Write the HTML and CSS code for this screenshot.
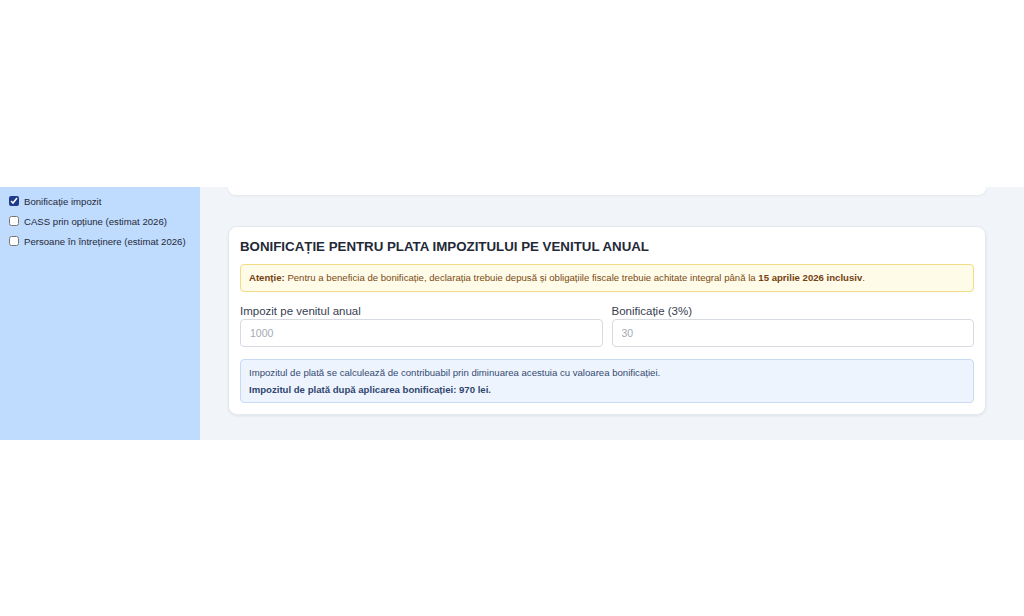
FILE: index.html
```html
<!DOCTYPE html>
<html lang="ro">
<head>
<meta charset="utf-8">
<title>Bonificație impozit</title>
<link rel="stylesheet" href="styles.css">
</head>
<body>
<div class="top-space"></div>
<div class="app">
  <aside class="sidebar">
    <label class="opt"><input type="checkbox" checked><span>Bonificație impozit</span></label>
    <label class="opt"><input type="checkbox"><span>CASS prin opțiune (estimat 2026)</span></label>
    <label class="opt"><input type="checkbox"><span>Persoane în întreținere (estimat 2026)</span></label>
  </aside>
  <main class="main">
    <div class="card-stub"></div>
    <section class="card">
      <h2 class="title">BONIFICAȚIE PENTRU PLATA IMPOZITULUI PE VENITUL ANUAL</h2>
      <div class="alert"><b>Atenție:</b> Pentru a beneficia de bonificație, declarația trebuie depusă și obligațiile fiscale trebuie achitate integral până la <b>15 aprilie 2026 inclusiv</b>.</div>
      <div class="fields">
        <div class="field">
          <label class="lbl">Impozit pe venitul anual</label>
          <input class="inp" type="text" placeholder="1000">
        </div>
        <div class="field">
          <label class="lbl">Bonificație (3%)</label>
          <input class="inp" type="text" placeholder="30">
        </div>
      </div>
      <div class="info">
        <p>Impozitul de plată se calculează de contribuabil prin diminuarea acestuia cu valoarea bonificației.</p>
        <p class="strong">Impozitul de plată după aplicarea bonificației: 970 lei.</p>
      </div>
    </section>
  </main>
</div>
</body>
</html>
```
FILE: styles.css
```css
* { box-sizing: border-box; }
html, body { margin: 0; padding: 0; background: #ffffff; }
body { font-family: "Liberation Sans", Arial, sans-serif; color: #1f2937; }
.top-space { height: 187px; }
.app { display: flex; height: 253px; }
.sidebar { width: 200px; background: #bfdbfe; padding: 4px 0 0 9px; display: flex; flex-direction: column; }
.opt { display: flex; align-items: center; height: 20px; font-size: 9.6px; color: #1f2937; white-space: nowrap; }
.opt input { width: 10px; height: 10px; margin: 0 5px 0 0; accent-color: #1e3a8a; }
.main { flex: 1; background: #f1f5f9; padding: 0 38px 0 28px; display: flex; flex-direction: column; }
.card-stub { height: 8px; background: #ffffff; border-radius: 0 0 10px 10px; box-shadow: 0 1px 3px rgba(0,0,0,0.06); }
.card { margin-top: 31px; background: #ffffff; border: 1px solid #e5e9ef; border-radius: 9px; padding: 11px 11px 11px; box-shadow: 0 1px 3px rgba(15,23,42,0.08); }
.title { margin: 0; font-size: 13.3px; line-height: 18px; font-weight: bold; color: #1f2937; }
.alert { margin-top: 8px; background: #fefbe8; border: 1px solid #f3dc86; border-radius: 4px; padding: 6px 8px; font-size: 9.6px; line-height: 14px; color: #7a4a12; }
.alert b { color: #744210; }
.fields { display: flex; gap: 9px; margin-top: 12px; }
.field { flex: 1; display: flex; flex-direction: column; }
.lbl { font-size: 11.5px; line-height: 14px; color: #374151; margin-bottom: 1px; }
.inp { height: 28px; border: 1px solid #d6dbe1; border-radius: 4px; padding: 0 9px; font-family: inherit; font-size: 10.5px; color: #374151; background: #fff; }
.inp::placeholder { color: #a3a9b3; }
.info { margin-top: 12px; background: #eef4fd; border: 1px solid #c8daf3; border-radius: 4px; padding: 4px 8px; font-size: 9.6px; line-height: 17px; color: #344a72; }
.info p { margin: 0; }
.info .strong { font-weight: bold; color: #2f4670; }
```
